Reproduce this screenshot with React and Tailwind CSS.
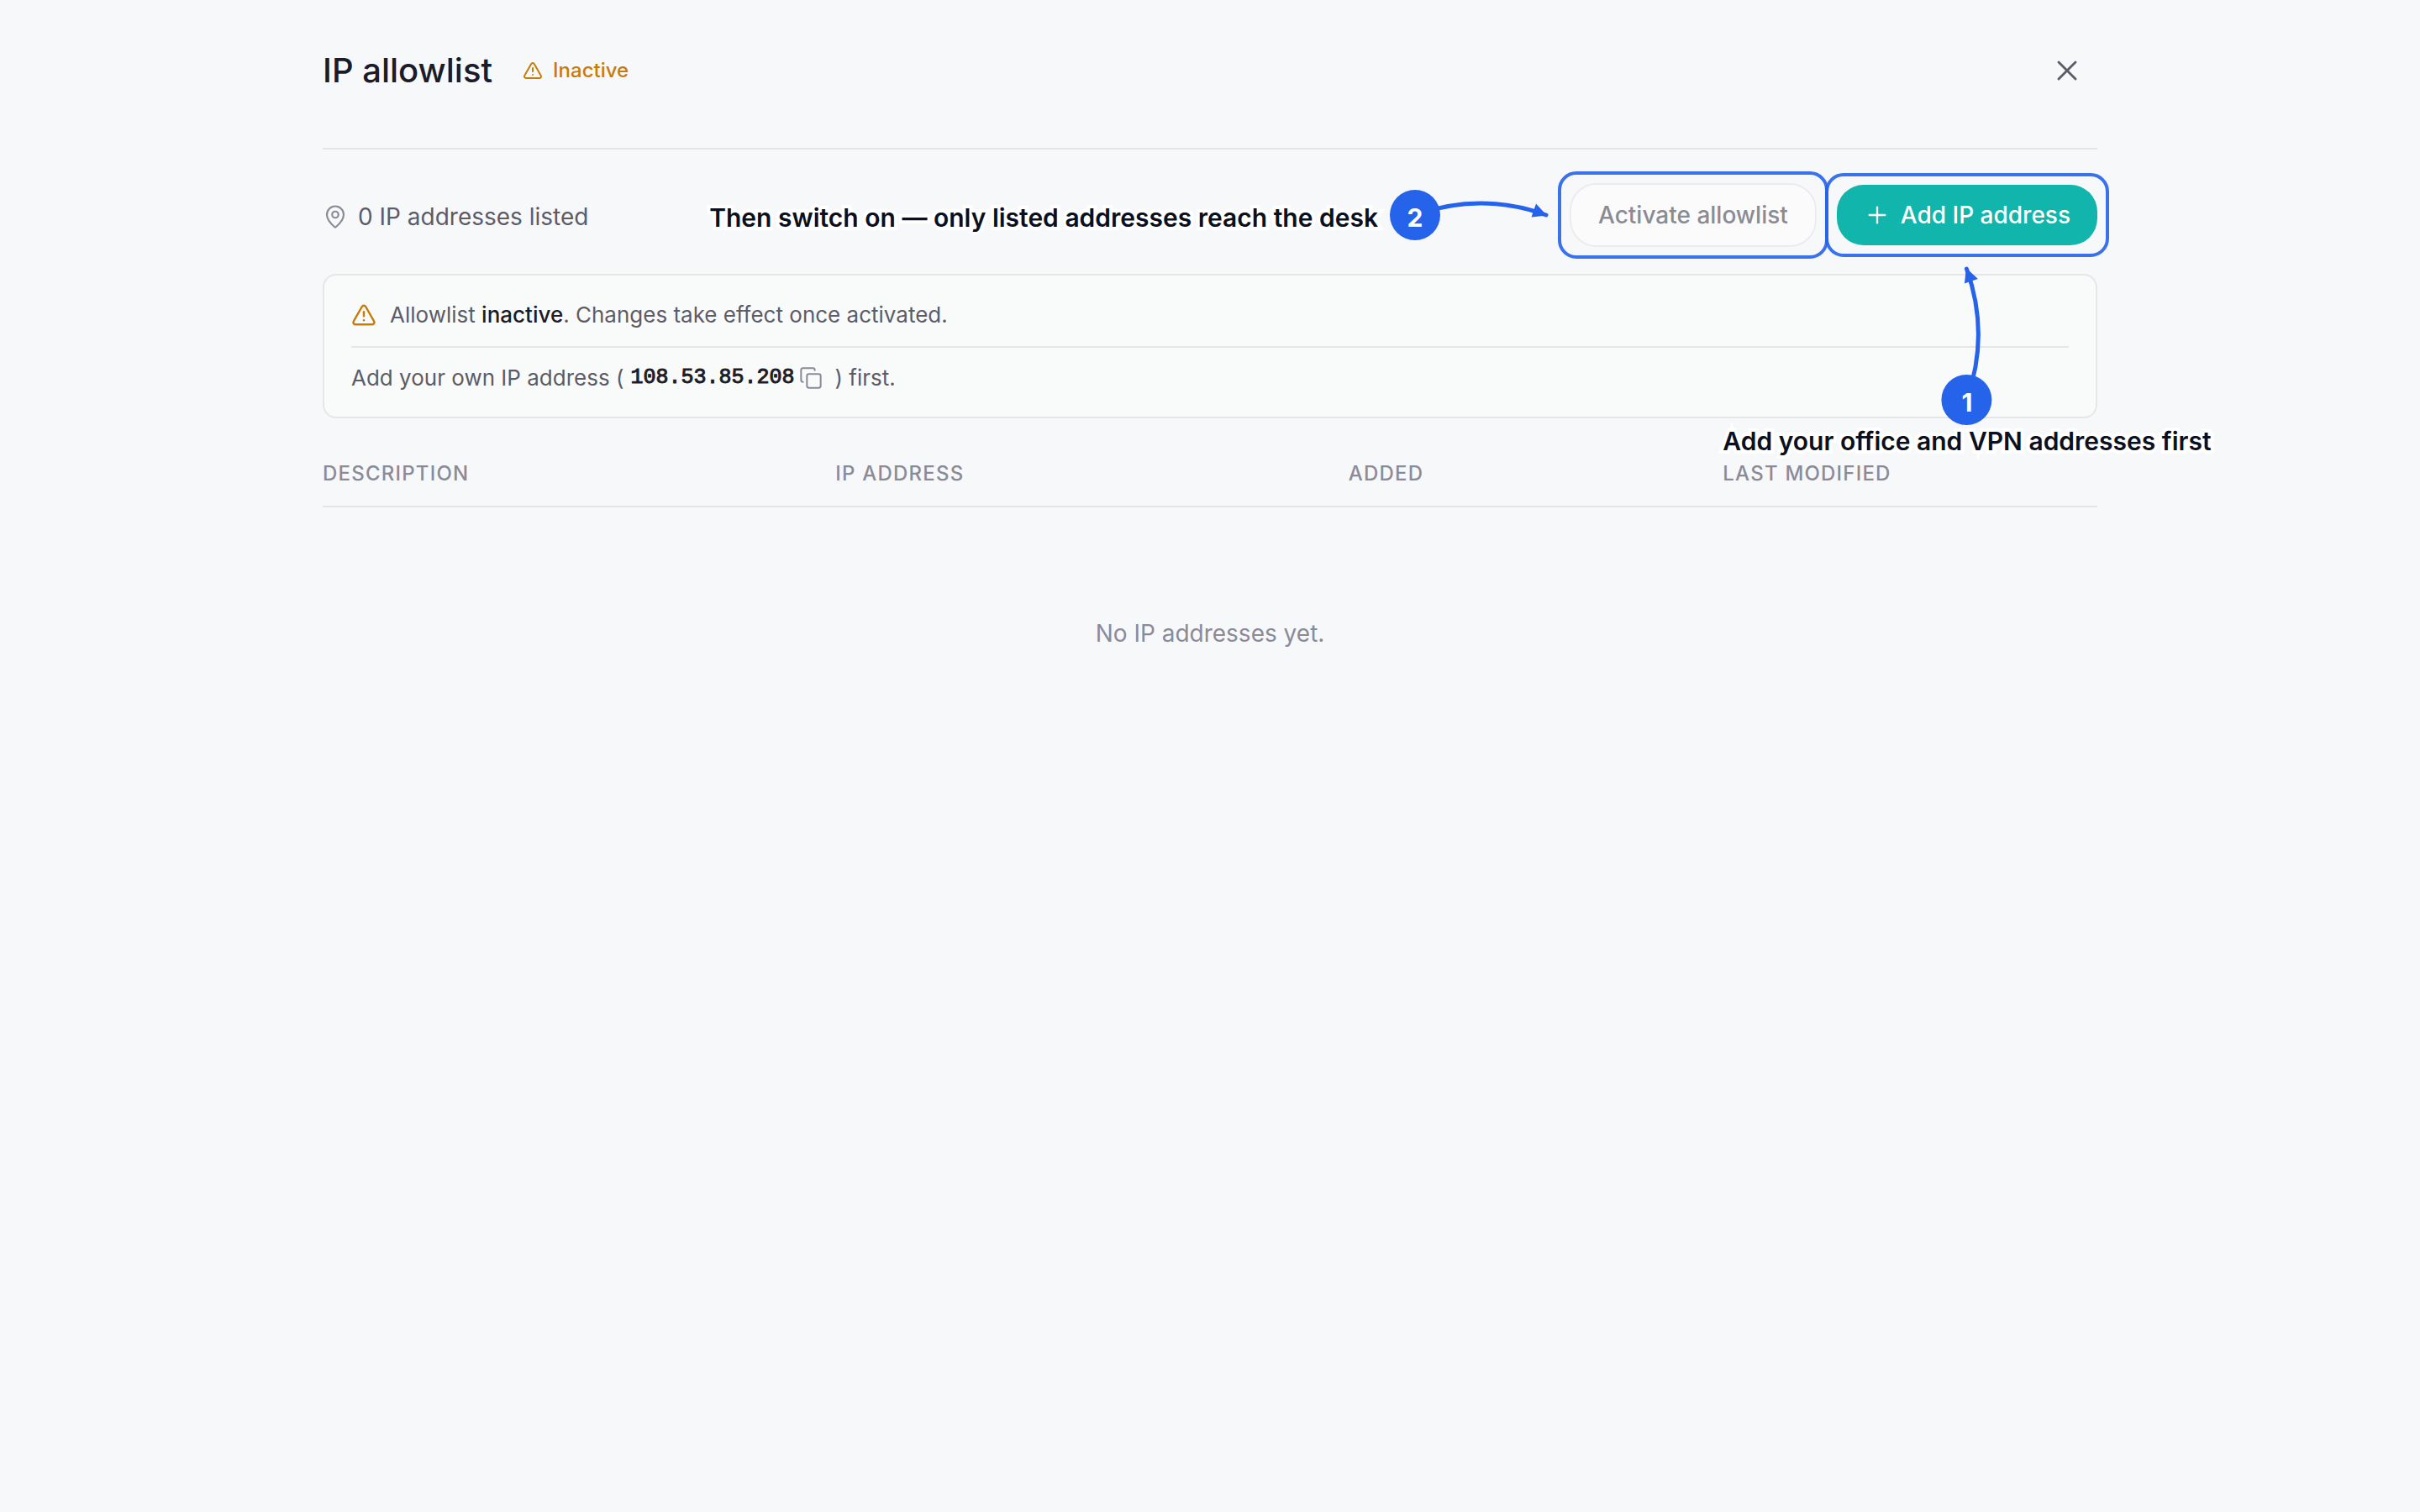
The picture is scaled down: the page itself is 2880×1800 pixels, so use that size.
import { Copy, MapPin, Plus, TriangleAlert, X } from 'lucide-react';

const ownIp = '108.53.85.208';

const columns = [
  { label: 'Description', width: 'w-[28.9%]' },
  { label: 'IP address', width: 'w-[28.9%]' },
  { label: 'Added', width: 'w-[21.1%]' },
  { label: 'Last modified', width: 'w-[21.1%]' },
];

function StepBadge({ step }) {
  return (
    <span className="z-10 flex size-15 shrink-0 items-center justify-center rounded-full bg-[#2563eb] pt-1.5 text-[30px] font-bold text-white">
      {step}
    </span>
  );
}

function StepLabel({ children }) {
  return (
    <span className="text-[30px] leading-[38px] font-semibold whitespace-nowrap text-[#0b1020] [-webkit-text-stroke:8px_white] [paint-order:stroke_fill]">
      {children}
    </span>
  );
}

// Blue frame drawn around a button that a step points at
function Highlight() {
  return <span className="pointer-events-none absolute -inset-3.5 rounded-[22px] border-4 border-[#2563eb]/90" />;
}

function ActivateStep() {
  return (
    <div className="pointer-events-none absolute inset-y-0 right-full mr-6 flex items-center">
      <div className="mr-3.5 pt-1.5">
        <StepLabel>Then switch on — only listed addresses reach the desk</StepLabel>
      </div>
      <StepBadge step={2} />
      <svg className="-ml-[30px] h-15 w-40 text-[#2563eb]" viewBox="0 0 160 60" fill="none" aria-hidden="true">
        <path d="M0 30Q78 2 156 30" stroke="currentColor" strokeWidth="5" strokeLinecap="round" />
        <path d="M144 16.5L157 30.5L138.5 32.5Z" fill="currentColor" />
      </svg>
    </div>
  );
}

function AddStep() {
  return (
    <div className="pointer-events-none absolute top-full left-1/2 z-10 mt-6 flex -translate-x-1/2 flex-col items-center">
      <svg className="h-40 w-15 text-[#2563eb]" viewBox="0 0 60 160" fill="none" aria-hidden="true">
        <path d="M30 160Q58 82 30 4" stroke="currentColor" strokeWidth="5" strokeLinecap="round" />
        <path d="M43.5 16L29.5 3L27.5 21.5Z" fill="currentColor" />
      </svg>
      <div className="-mt-[30px]">
        <StepBadge step={1} />
      </div>
      <StepLabel>Add your office and VPN addresses first</StepLabel>
    </div>
  );
}

export default function App() {
  return (
    <main className="min-h-screen bg-[#f7f8fa] font-[Inter,sans-serif] text-[#5c5c68]">
      <div className="mx-auto max-w-[2112px]">
        <header className="flex items-center justify-between border-b-2 border-[#e4e5e7] pt-12 pb-14">
          <div className="flex items-center gap-9">
            <h1 className="text-[40px] leading-12 font-medium text-[#1c1c28]">IP allowlist</h1>
            <span className="flex items-center gap-3 text-2xl font-medium text-[#c77c0a]">
              <TriangleAlert className="size-6" strokeWidth={2} />
              Inactive
            </span>
          </div>
          <button type="button" aria-label="Close" className="flex size-18 items-center justify-center rounded-full">
            <X className="size-10" strokeWidth={1.75} />
          </button>
        </header>

        <div className="flex items-center justify-between pt-10 pb-8">
          <p className="flex items-center gap-3 pt-1 text-[28px] leading-10">
            <MapPin className="size-[30px] text-[#8b8b98]" strokeWidth={1.75} />
            0 IP addresses listed
          </p>
          <div className="flex items-center gap-6">
            <div className="relative">
              <button
                type="button"
                disabled
                className="block rounded-[32px] border-2 border-[#ececf0] bg-[#fbfbfc] px-8 py-4 text-[28px] leading-10 font-medium text-[#8b8b93]"
              >
                Activate allowlist
              </button>
              <Highlight />
              <ActivateStep />
            </div>
            <div className="relative">
              <button
                type="button"
                className="flex items-center gap-3 rounded-[32px] bg-[#11b5ac] px-8 py-4 text-[28px] leading-10 font-medium text-white"
              >
                <Plus className="size-8" strokeWidth={1.75} />
                Add IP address
              </button>
              <Highlight />
              <AddStep />
            </div>
          </div>
        </div>

        <section className="rounded-2xl border-2 border-[#e5e7e7] bg-[#f9fbfa] px-8 pt-6 pb-[26px] text-[26px]">
          <p className="flex items-center gap-4 border-b-2 border-[#e5e7e7] pt-px pb-[15px] leading-11">
            <TriangleAlert className="size-[30px] text-[#c77c0a]" strokeWidth={2} />
            <span>
              Allowlist <strong className="font-medium text-[#1c1c28]">inactive</strong>. Changes take effect once activated.
            </span>
          </p>
          <div className="flex items-center pt-4 leading-10">
            <span>Add your own IP address (</span>
            <code className="ml-2 font-['Liberation_Mono',monospace] text-[25px] font-medium text-[#1c1c28] [-webkit-text-stroke:1px_#1c1c28]">
              {ownIp}
            </code>
            <button type="button" aria-label="Copy IP address" className="mr-3.5 ml-1.5 text-[#8b8b98]">
              <Copy className="size-7" strokeWidth={1.75} />
            </button>
            <span>) first.</span>
          </div>
        </section>

        <table className="mt-10 w-full table-fixed">
          <thead>
            <tr className="border-b-2 border-[#e4e5e7]">
              {columns.map((col) => (
                <th
                  key={col.label}
                  className={`${col.width} pt-2.5 pb-[22px] text-left text-2xl font-medium tracking-wider text-[#8b8b98] uppercase`}
                >
                  {col.label}
                </th>
              ))}
            </tr>
          </thead>
          <tbody>
            <tr>
              <td colSpan={columns.length} className="py-32 text-center text-[28px] leading-11 text-[#8b8b98]">
                No IP addresses yet.
              </td>
            </tr>
          </tbody>
        </table>
      </div>
    </main>
  );
}
